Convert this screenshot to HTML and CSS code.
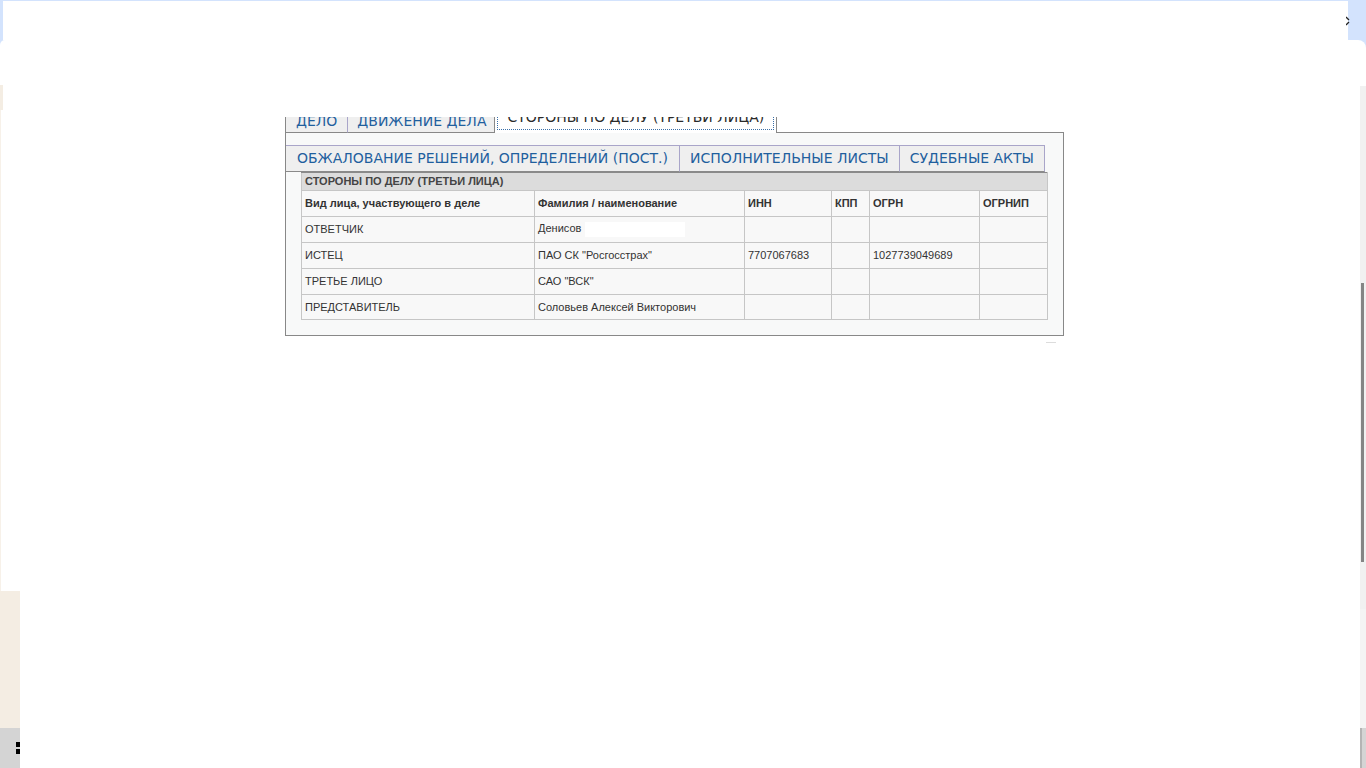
FILE: index.html
```html
<!DOCTYPE html>
<html lang="ru">
<head>
    <meta charset="UTF-8">
    <title>Стороны по делу</title>
    <link rel="stylesheet" href="styles.css">
</head>
<body>
    <div class="chrome-top">
        <div class="chrome-blank"></div>
        <div class="chrome-close">
            <svg width="6" height="12" viewBox="0 0 6 12"><path d="M0 2 L3 5 M3 7 L0 10" stroke="#222" stroke-width="1.3" fill="none"/></svg>
        </div>
    </div>
    <div class="popup-strip">
        <div class="popup-card"></div>
    </div>

    <div class="screen">
        <div class="left-edge">
            <div class="edge-top"></div>
            <div class="edge-line"></div>
            <div class="edge-block"></div>
            <div class="taskbar-bit">
                <span class="win-sq"></span>
                <span class="win-sq"></span>
            </div>
        </div>

        <div class="page">
            <div class="case-tabs">
                <ul class="tab-nav top">
                    <li><a href="#">ДЕЛО</a></li>
                    <li class="moves"><a href="#">ДВИЖЕНИЕ ДЕЛА</a></li>
                    <li class="active"><a href="#">СТОРОНЫ ПО ДЕЛУ (ТРЕТЬИ ЛИЦА)</a></li>
                    <li class="filler"></li>
                </ul>
                <div class="tab-panel">
                    <ul class="tab-nav sub">
                        <li class="appeals"><a href="#">ОБЖАЛОВАНИЕ РЕШЕНИЙ, ОПРЕДЕЛЕНИЙ (ПОСТ.)</a></li>
                        <li><a href="#">ИСПОЛНИТЕЛЬНЫЕ ЛИСТЫ</a></li>
                        <li><a href="#">СУДЕБНЫЕ АКТЫ</a></li>
                    </ul>

                    <table class="parties">
                        <colgroup>
                            <col style="width:233px">
                            <col style="width:210px">
                            <col style="width:87px">
                            <col style="width:38px">
                            <col style="width:110px">
                            <col style="width:68px">
                        </colgroup>
                        <tr class="caption-row">
                            <th colspan="6">СТОРОНЫ ПО ДЕЛУ (ТРЕТЬИ ЛИЦА)</th>
                        </tr>
                        <tr class="head-row">
                            <th>Вид лица, участвующего в деле</th>
                            <th>Фамилия / наименование</th>
                            <th>ИНН</th>
                            <th>КПП</th>
                            <th>ОГРН</th>
                            <th>ОГРНИП</th>
                        </tr>
                        <tr>
                            <td>ОТВЕТЧИК</td>
                            <td>Денисов <span class="hidden-name"></span></td>
                            <td></td><td></td><td></td><td></td>
                        </tr>
                        <tr>
                            <td>ИСТЕЦ</td>
                            <td>ПАО СК "Росгосстрах"</td>
                            <td>7707067683</td>
                            <td></td>
                            <td>1027739049689</td>
                            <td></td>
                        </tr>
                        <tr>
                            <td>ТРЕТЬЕ ЛИЦО</td>
                            <td>САО "ВСК"</td>
                            <td></td><td></td><td></td><td></td>
                        </tr>
                        <tr class="last-row">
                            <td>ПРЕДСТАВИТЕЛЬ</td>
                            <td>Соловьев Алексей Викторович</td>
                            <td></td><td></td><td></td><td></td>
                        </tr>
                    </table>
                </div>
                <div class="resize-mark"></div>
            </div>
        </div>

        <div class="scrollbar">
            <div class="track">
                <div class="thumb"></div>
            </div>
            <div class="track-low"></div>
            <div class="track-task"></div>
        </div>
    </div>
</body>
</html>
```

FILE: styles.css
```css
body {
    margin: 0;
    padding: 0;
    height: 768px;
    overflow: hidden;
    background-color: #fff;
    font-family: "Liberation Sans", Arial, sans-serif;
}
ul {
    margin: 0;
    padding: 0;
    list-style: none;
}
a {
    text-decoration: none;
}

/* browser strip on top */
.chrome-top {
    height: 40px;
    display: flex;
    background-color: #d3e3fd;
}
.chrome-blank {
    flex: 1;
    margin: 1px 0 0 3px;
    background-color: #fff;
}
.chrome-close {
    width: 20px;
    padding-top: 13px;
    margin-left: -2px;
}
.popup-strip {
    height: 45px;
    background-color: #d3e3fd;
}
.popup-card {
    height: 45px;
    background-color: #fff;
    border-radius: 5px 8px 0 0;
}

.screen {
    display: flex;
    height: 683px;
}
.left-edge {
    width: 20px;
    display: flex;
    flex-direction: column;
}
.edge-top {
    height: 25px;
    width: 3px;
    background-color: #f4ede3;
}
.edge-line {
    height: 481px;
    width: 1px;
    background-color: #f7f1e9;
}
.edge-block {
    height: 137px;
    background-color: #f4ede3;
}
.taskbar-bit {
    height: 40px;
    background-color: #d4d4d4;
    display: flex;
    flex-direction: column;
    align-items: flex-end;
    padding-top: 14px;
    box-sizing: border-box;
    gap: 2px;
}
.win-sq {
    width: 4px;
    height: 5px;
    background-color: #000;
}

.page {
    flex: 1;
    background-color: #fff;
}
.case-tabs {
    width: 779px;
    margin: 32px 0 0 265px;
}

/* tabs */
.tab-nav.top {
    display: flex;
    height: 16px;
    overflow: hidden;
    align-items: flex-end;
    border-left: 1px solid #888;
}
.tab-nav.top li {
    background-color: #efefef;
    border-right: 1px solid #a9a5c9;
    border-bottom: 1px solid #888;
    padding: 10px 10px 3px 10px;
}
.tab-nav.top li.moves {
    border-right-color: #888;
    padding: 10px 8px 3px 9px;
}
.tab-nav a {
    font-family: "DejaVu Sans", Verdana, sans-serif;
    font-size: 14px;
    line-height: 16px;
    color: #1f5f9e;
    display: block;
}
.tab-nav.top li.active {
    background-color: #fff;
    border-right: 1px solid #888;
    border-bottom: none;
    padding: 10px 2px 3px 2px;
}
.tab-nav.top li.active a {
    color: #2a2a2a;
    padding: 0 9px 4px 9px;
    border: 1px dotted #3a6fa8;
    border-top: none;
}
.tab-nav.top li.filler {
    flex: 1;
    background-color: transparent;
    border-right: none;
    padding: 0;
}

.tab-panel {
    border: 1px solid #888;
    border-top: none;
    background-color: #f8f9f9;
    padding: 12px 15px 15px 0;
}
.tab-nav.sub {
    display: flex;
}
.tab-nav.sub li {
    background-color: #efefef;
    border: 1px solid #a9a5c9;
    border-left: none;
    border-bottom-color: #8a8a8a;
    padding: 0 10px;
}
.tab-nav.sub li.appeals {
    padding: 0 11px;
}
.tab-nav.sub a {
    line-height: 25px;
}

/* parties table */
.parties {
    margin-left: 15px;
    border-collapse: collapse;
    table-layout: fixed;
    width: 746px;
    background-color: #f8f8f8;
    font-size: 11px;
    color: #333;
}
.parties th, .parties td {
    border: 1px solid #c6c6c6;
    padding: 0 3px 1px 3px;
    text-align: left;
    height: 24px;
    white-space: nowrap;
    overflow: hidden;
}
.parties .caption-row th {
    height: 16px;
    background-color: #dcdcdc;
    border-top: 1px solid #8a8a8a;
    color: #444;
}
.parties .last-row td {
    height: 23px;
}
.hidden-name {
    display: inline-block;
    width: 100px;
    height: 15px;
    background-color: #fff;
    vertical-align: -5px;
    margin-left: 1px;
}
.resize-mark {
    width: 10px;
    height: 2px;
    margin: 6px 0 0 761px;
    border-top: 1px solid #dcdcdc;
}

/* scrollbar on the right */
.scrollbar {
    width: 6px;
    display: flex;
    flex-direction: column;
}
.track {
    height: 523px;
    margin-top: 1px;
    background-color: #f1f1f1;
}
.thumb {
    width: 3px;
    height: 279px;
    margin: 197px 0 0 1px;
    background-color: #858585;
}
.track-low {
    height: 119px;
    background-color: #f4f4f4;
}
.track-task {
    height: 40px;
    background-color: #d4d4d4;
    border-left: 2px solid #b4b4b4;
    box-sizing: border-box;
}
```
